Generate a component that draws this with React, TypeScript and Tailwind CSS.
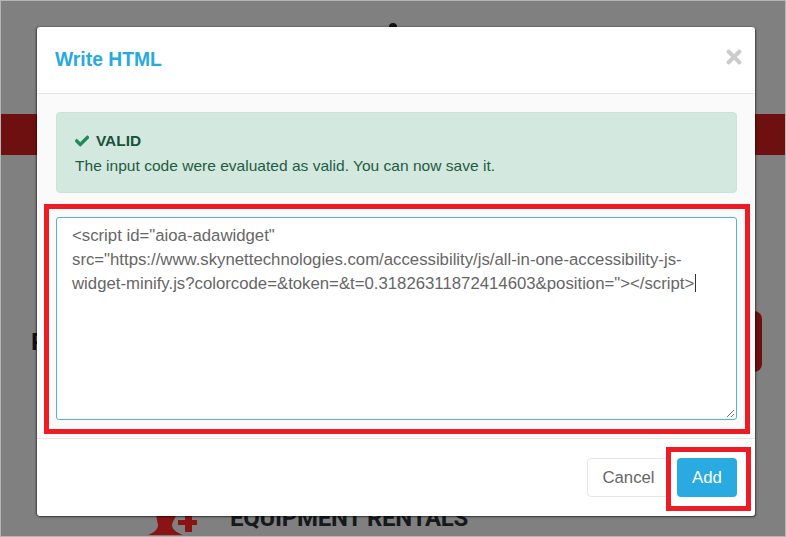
import { FaCheck, FaTimes } from "react-icons/fa";

const sans = "font-['Liberation_Sans',Arial,sans-serif]";

function Marker({ className }: { className: string }) {
  return <div className={`pointer-events-none absolute border-[5px] border-[#ed1c24] ${className}`} />;
}

export default function App() {
  return (
    <div className={`relative h-[537px] w-[786px] overflow-hidden bg-[#808080] ${sans}`}>
      {/* Page dimmed behind the dialog */}
      <div className="flex h-full flex-col pt-[23px]">
        <div className="mx-auto h-[4px] w-[8px] rounded-t-full bg-[#111]" />
        <div className="mt-[87px] h-[41px] bg-[#6f1010]" />
        <div className="mt-[156px] flex h-[61px] items-center justify-between pl-[31px]">
          <span className="text-[24px] font-bold text-[#111]">P</span>
          <div className="h-full w-[40px] -translate-x-[24px] rounded-lg bg-[#6f1010]" />
        </div>
        <div className="mt-[138px] flex items-start gap-[32px] pl-[148px]">
          <svg width="50" height="27" viewBox="0 0 50 27" className="shrink-0">
            <path d="M8 0H30C28 8 25 10 24 15C24 20 30 23 35 25H0C5 23 10 20 10 15C9 10 8 6 8 0Z" fill="#8a1414" />
            <path d="M37 3h7v7h5v5h-5v7h-7v-7h-7v-5h7Z" fill="#8a1414" />
          </svg>
          <span className="-mt-[4px] font-['Liberation_Sans_Narrow',Roboto,sans-serif] text-[24px] font-bold leading-none tracking-[-0.27px] text-[#16181c]">
            EQUIPMENT RENTALS
          </span>
        </div>
      </div>

      {/* Dialog */}
      <div className="absolute left-[37px] top-[27px] flex h-[489px] w-[718px] flex-col rounded-[3px] bg-white shadow-[-1px_0_2px_rgba(0,0,0,0.5),1px_1px_2px_rgba(0,0,0,0.5)]">
        <header className="flex h-[67px] shrink-0 items-center justify-between border-b border-[#e5e5e5] pl-[18px] pr-[10px]">
          <h2 className="text-[19.3px] font-bold leading-none text-[#27aae1]">Write HTML</h2>
          <FaTimes className="mb-[7px] text-[#cccccc]" size={22} />
        </header>

        <div className="relative flex flex-1 flex-col border-b border-[#e5e5e5] bg-[#fafafa] pl-[19px] pr-[18px] pt-[18px]">
          <div className="h-[81px] rounded-[4px] border border-[#c9e3d6] bg-[#d3e8de] px-[18px] pt-[18px]">
            <div className="flex items-center gap-[7px] text-[15.4px] font-bold leading-[20px] text-[#155239]">
              <FaCheck className="text-[#1e8a5a]" size={14} stroke="currentColor" strokeWidth={30} />
              VALID
            </div>
            <p className="mt-[5px] text-[15.55px] leading-[20px] text-[#1f5c43]">
              The input code were evaluated as valid. You can now save it.
            </p>
          </div>

          <div className="relative mt-[24px] h-[203px] rounded-[3px] border border-[#4fb3dc] bg-white py-[6px] pl-[15px] pr-[15px] text-[16.75px] leading-[24px] text-[#666]">
            <div>
              {'<script id="aioa-adawidget"'}
              <br />
              {'src="https://www.skynettechnologies.com/accessibility/js/all-in-one-accessibility-js-'}
              <br />
              {'widget-minify.js?colorcode=&token=&t=0.31826311872414603&position="></script>'}
              <span className="ml-px inline-block h-[18px] w-px bg-[#333] align-[-3px]" />
            </div>
            <svg width="9" height="9" viewBox="0 0 9 9" className="absolute bottom-[1px] right-[1px]">
              <path d="M1 8 8 1M5 8 8 5" stroke="#777" strokeWidth="1" />
            </svg>
          </div>

          <Marker className="left-[7px] top-[110px] h-[230px] w-[706px]" />
        </div>

        <footer className="relative flex h-[77px] shrink-0 items-start justify-end gap-[7px] pr-[18px] pt-[19px]">
          <button className="h-[39px] w-[83px] rounded-[4px] border border-[#e6e6e6] bg-white text-[16.75px] text-[#666]">
            Cancel
          </button>
          <button className="h-[39px] w-[60px] rounded-[4px] bg-[#29abe2] text-[16.75px] text-white">
            Add
          </button>
          <Marker className="left-[629px] top-[8px] h-[64px] w-[85px]" />
        </footer>
      </div>

      {/* Screenshot edge */}
      <div className="pointer-events-none absolute inset-0 border border-[#b5b5b5]" />
    </div>
  );
}
